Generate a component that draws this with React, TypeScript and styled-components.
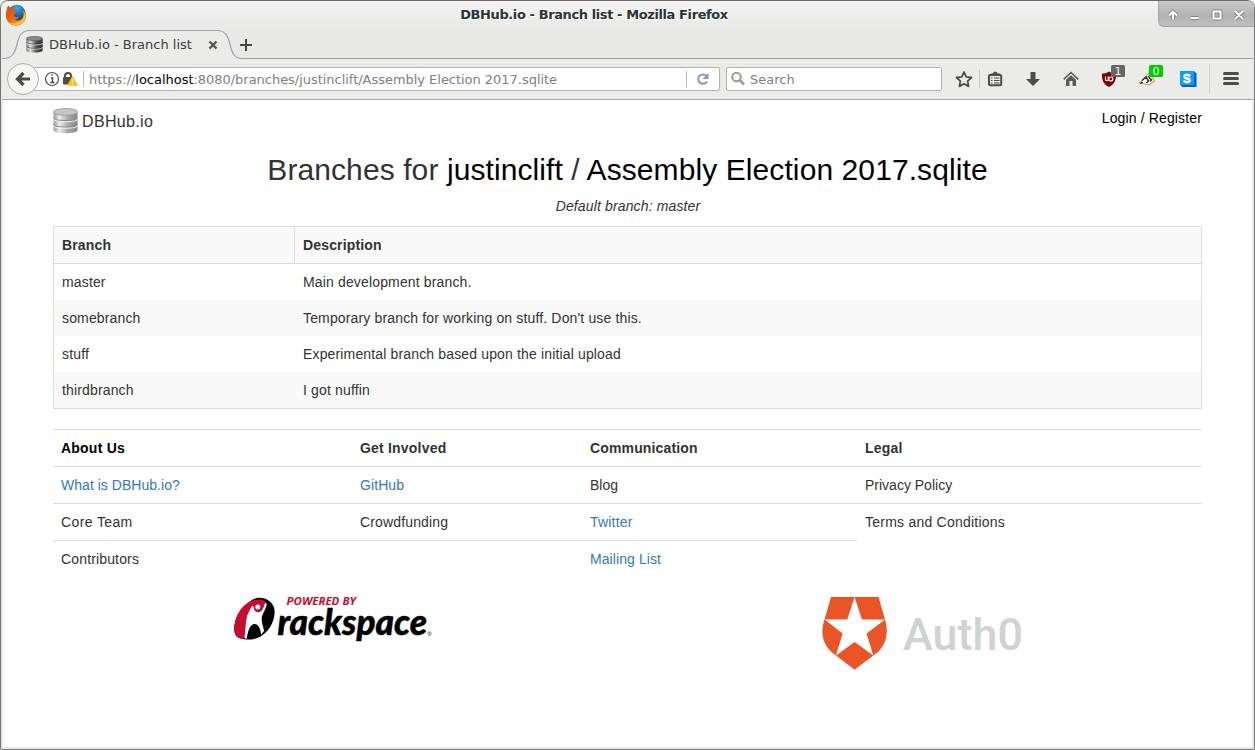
import React from 'react';
import styled, { createGlobalStyle } from 'styled-components';

const Global = createGlobalStyle`
  *, *::before, *::after { box-sizing: border-box; }
  body { margin: 0; background: #fff; }
`;

const Window = styled.div`
  width: 1255px;
  height: 750px;
  display: flex;
  flex-direction: column;
  border: 1px solid #767676;
  border-top-color: #6d6b6b;
  border-radius: 8px 8px 2px 2px;
  overflow: hidden;
  background: #e8e8e7;
  font-family: 'DejaVu Sans', sans-serif;
  font-size: 13px;
  color: #2e3436;
`;

const TitleBar = styled.header`
  height: 29px;
  flex: none;
  display: flex;
  align-items: flex-start;
  background: linear-gradient(#f3f3f3, #e8e8e7);
`;

const TitleIcon = styled.div`
  width: 29px;
  padding: 3px 0 0 4px;
`;

const Title = styled.div`
  flex: 1;
  line-height: 27px;
  text-align: center;
  font-weight: bold;
  font-size: 13px;
  letter-spacing: -0.4px;
  text-shadow: 1px 1px 0 #fff;
`;

const WindowControls = styled.div`
  width: 96px;
  height: 26px;
  border: solid #a5a5a5;
  border-width: 0 0 1px 1px;
  border-radius: 0 0 0 6px;
  background: linear-gradient(#c9c9c9, #b2b2b2 60%, #c0c0c0);
`;

const TabStrip = styled.div`
  height: 29px;
  flex: none;
  display: grid;
  grid-template-columns: 240px 1fr;
  margin: 0 1px;
  background: linear-gradient(#9a9a99, #9a9a99) bottom / 100% 1px no-repeat;
`;

const Tab = styled.div`
  display: grid;
  height: 29px;
  > * { grid-area: 1 / 1; }
`;

const TabLabel = styled.div`
  display: flex;
  align-items: center;
  padding-left: 24px;
  height: 29px;
`;

const TabText = styled.span`
  width: 165px;
  padding-left: 6px;
  white-space: nowrap;
  color: #3a3f41;
`;

const NavBar = styled.nav`
  height: 41px;
  flex: none;
  display: flex;
  align-items: center;
  margin: 0 1px;
  border-bottom: 1px solid #a9a8a4;
  background: #ebebea;
  color: #808080;
`;

const BackButton = styled.div`
  width: 32px;
  height: 32px;
  margin-left: 5px;
  flex: none;
  border: 1px solid #adadad;
  border-radius: 50%;
  background: #f6f6f5;
  display: flex;
  align-items: center;
  justify-content: center;
  z-index: 1;
`;

const Field = styled.div<{ $w: number }>`
  width: ${p => p.$w}px;
  height: 24px;
  flex: none;
  display: flex;
  align-items: center;
  border: 1px solid #b3b3b0;
  border-radius: 2px;
  background: #fff;
  white-space: nowrap;
`;

const UrlField = styled(Field)`
  margin-left: -6px;
  padding-left: 10px;
`;

const SearchField = styled(Field)`
  margin-left: 6px;
  padding-left: 3px;
  gap: 4px;
`;

const Divider = styled.i<{ $h: number; $l: number; $r: number }>`
  width: 1px;
  height: ${p => p.$h}px;
  margin: 0 ${p => p.$r}px 0 ${p => p.$l}px;
  background: #b9b9b7;
  flex: none;
`;

const UrlText = styled.div`
  flex: 1;
  letter-spacing: -0.03px;
  b { font-weight: normal; color: #000; }
`;

const Tools = styled.div`
  flex: none;
  height: 40px;
`;

const Page = styled.main`
  flex: 1;
  margin: 0 2px 2px;
  padding: 8px 50px 0 50px;
  background: #fff;
  color: #333;
  font-family: 'Liberation Sans', Arial, sans-serif;
  font-size: 14px;
  line-height: 20px;
`;

const PageHeader = styled.div`
  display: flex;
  height: 43px;
  align-items: flex-start;
`;

const Brand = styled.div`
  flex: 1;
  display: flex;
  align-items: center;
  gap: 4px;
  height: 26px;
  font-size: 16px;
  letter-spacing: 0.35px;
  > span { padding-top: 2px; }
`;

const Login = styled.div`
  color: #000;
  letter-spacing: 0.14px;
`;

const Heading = styled.h2`
  margin: 0;
  height: 37px;
  line-height: 37px;
  font-size: 30px;
  font-weight: normal;
  letter-spacing: 0.09px;
  text-align: center;
  white-space: nowrap;
  a { color: #000; }
`;

const DefaultBranch = styled.div`
  height: 38px;
  padding: 8px 0 0 1px;
  text-align: center;
  font-style: italic;
  letter-spacing: 0.14px;
`;

const BranchTable = styled.div`
  border: 1px solid #ddd;
  margin-bottom: 20px;
`;

const BranchRow = styled.div<{ $head?: boolean; $odd?: boolean }>`
  display: grid;
  grid-template-columns: 241px 1fr;
  height: ${p => (p.$head ? 37 : 36)}px;
  line-height: 36px;
  letter-spacing: 0.15px;
  font-weight: ${p => (p.$head ? 'bold' : 'normal')};
  background: ${p => (p.$head || p.$odd ? '#f9f9f9' : '#fff')};
  border-bottom: ${p => (p.$head ? '1px solid #ddd' : '0')};
  > span { padding-left: 8px; }
  > span:first-child { border-right: ${p => (p.$head ? '1px solid #ddd' : '0')}; }
`;

const FooterTable = styled.div`
  display: grid;
  grid-template-columns: 299px 230px 275px 345px;
`;

const FooterCell = styled.div<{ $kind?: string; $track?: number }>`
  height: 37px;
  line-height: 36px;
  padding-left: 8px;
  letter-spacing: ${p => p.$track ?? 0}px;
  border-top: 1px solid ${p => (p.$kind === 'none' ? 'transparent' : '#ddd')};
  font-weight: ${p => (p.$kind === 'head' || p.$kind === 'first' ? 'bold' : 'normal')};
  color: ${p => (p.$kind === 'link' ? '#337ab7' : p.$kind === 'first' ? '#000' : '#333')};
`;

const Sponsors = styled.div`
  display: grid;
  grid-template-columns: 588px 1fr;
  align-items: start;
  padding: 9px 0 0 181px;
  svg { overflow: visible; }
  svg:last-child { margin-top: 11px; }
`;

const branches = [
  ['master', 'Main development branch.'],
  ['somebranch', "Temporary branch for working on stuff. Don't use this."],
  ['stuff', 'Experimental branch based upon the initial upload'],
  ['thirdbranch', 'I got nuffin'],
];

const footer: [string, string?, number?][] = [
  ['About Us', 'first', 0.22], ['Get Involved', 'head', 0.2], ['Communication', 'head', 0.15], ['Legal', 'head', 0.2],
  ['What is DBHub.io?', 'link', 0.03], ['GitHub', 'link', 0.08], ['Blog'], ['Privacy Policy'],
  ['Core Team', '', 0.38], ['Crowdfunding', '', 0.15], ['Twitter', 'link', 0.2], ['Terms and Conditions', '', 0.23],
  ['Contributors', '', 0.15], [''], ['Mailing List', 'link', 0.08], ['', 'none'],
];

const Database = ({ w, h, dark }: { w: number; h: number; dark?: boolean }) => {
  const id = dark ? 'dbDark' : 'dbLight';
  const stops = dark ? ['#777', '#ddd', '#555', '#333'] : ['#999', '#eee', '#aaa', '#858585'];
  return (
    <svg width={w} height={h} viewBox="0 0 24 26" preserveAspectRatio="none">
      <defs>
        <linearGradient id={id}>
          <stop offset="0" stopColor={stops[0]} />
          <stop offset=".25" stopColor={stops[1]} />
          <stop offset=".6" stopColor={stops[2]} />
          <stop offset="1" stopColor={stops[3]} />
        </linearGradient>
      </defs>
      <path d="M.5 4v18c0 4.300 23 4.300 23 0V4z" fill={`url(#${id})`} />
      <path d="M.5 9.500c0 4 23 4 23 0M.5 16c0 4 23 4 23 0" fill="none" stroke={dark ? '#333' : '#8a8a8a'} strokeWidth="1" />
      <path d="M.5 10.700c0 4 23 4 23 0M.5 17.200c0 4 23 4 23 0" fill="none" stroke="#eee" strokeWidth="1" />
      <ellipse cx="12" cy="3.900" rx="11.500" ry="3.400" fill={dark ? '#888' : '#c6c6c6'} stroke={dark ? '#555' : '#999'} strokeWidth=".8" />
    </svg>
  );
};

const Firefox = () => (
  <svg width="22" height="22" viewBox="0 0 22 22">
    <defs>
      <linearGradient id="fox" x1="0" y1="0" x2="1" y2="1">
        <stop offset="0" stopColor="#d9480f" />
        <stop offset=".5" stopColor="#ee6a12" />
        <stop offset="1" stopColor="#ffc928" />
      </linearGradient>
      <radialGradient id="globe" cx=".5" cy=".2" r=".8">
        <stop offset="0" stopColor="#35b1e6" />
        <stop offset="1" stopColor="#123c7c" />
      </radialGradient>
    </defs>
    <circle cx="11" cy="11.500" r="10" fill="#c9380d" />
    <circle cx="12" cy="8.700" r="8" fill="url(#globe)" />
    <path d="M2 5c0-2 1-3 2-3.500 0 1.300.5 2 1.500 2.500 1.500-.5 3 0 4.500 1-1 .5-2 1.500-1 2.500l2 .6c0 1.200-1.500 1.700-2.300 2.400.1 2.500 3 3.500 5.300 2.500-1 2.500-4 2.500-5 2 3 3 10 1.500 9.500-5-.1-2-.7-3.300-1.500-4.300C20 7 21 9.500 21 12c0 6-5 9.500-10 9.500S1 17.500 1 11.500C1 8.500 1.500 6.500 2 5z" fill="url(#fox)" />
    <path d="M20.500 9c1 7-4 12-9.500 12-3 0-5-.9-7-2.800 7 2.800 14.500-.7 15-7.200z" fill="#ffd23a" opacity=".75" />
  </svg>
);

const Controls = () => (
  <svg width="95" height="25" viewBox="0 0 95 25">
    <g fill="none" stroke="#858585" strokeWidth="4" strokeLinejoin="round">
      <path d="M14 18.500v-7M10 14.500l4-3.800 4 3.800M31.500 17h8M54.500 10.500h7v7h-7zM76 10.500l8 7.500M84 10.500l-8 7.500" />
    </g>
    <g fill="none" stroke="#fff" strokeWidth="2">
      <path d="M14 18.500v-7M10 14.500l4-3.800 4 3.800M31.500 17h8M54.500 10.500h7v7h-7zM76 10l8 8M84 10l-8 8" />
    </g>
  </svg>
);

const TabShape = () => (
  <svg width="240" height="29" viewBox="0 0 240 29">
    <path d="M0 29V28.500h3c7 0 10-6 12-14C17 5 20 .5 28 .5h187c8 0 11 5 13 14 2 8 4 14 12 14V29z" fill="#ebebea" />
    <path d="M0 28.500h2c8 0 11-6 13-14C17 5 20 .5 28 .5h187c8 0 11 5 13 14 2 8 4 14 12 14" fill="none" stroke="#9ba3ad" strokeWidth="1.200" />
  </svg>
);

const PageInfo = () => (
  <svg width="34" height="18" viewBox="0 0 34 18">
    <circle cx="8" cy="9" r="6.500" fill="none" stroke="#4d4d4d" strokeWidth="1.200" />
    <path d="M7 8h1.500v4.500M6.500 12.500h4M7.300 5h1.500" fill="none" stroke="#4d4d4d" strokeWidth="1.500" />
    <path d="M21 8V6a3 3 0 0 1 6 0v2" fill="none" stroke="#4d4d4d" strokeWidth="2" />
    <rect x="19" y="7" width="9" height="7.500" rx="1" fill="#4d4d4d" />
    <path d="M28.500 6.500l4.800 8.800h-9.600z" fill="#ffbf00" stroke="#ffbf00" strokeWidth="1" strokeLinejoin="round" />
    <path d="M28.500 9v3.500M28.500 13.300v1.400" stroke="#fff" strokeWidth="1.400" />
  </svg>
);

const Toolbar = () => (
  <svg width="309" height="40" viewBox="942 59 309 40" fontFamily="DejaVu Sans, sans-serif">
    <path d="M964 72l2.200 4.900 5.300.6-3.900 3.600 1 5.300-4.600-2.700-4.600 2.700 1-5.300-3.900-3.600 5.300-.6z" fill="none" stroke="#4c4c4c" strokeWidth="1.800" strokeLinejoin="round" />
    <path d="M979.500 70v18" stroke="#c2c2c0" />
    <rect x="989" y="75" width="12.200" height="10.300" rx="1" fill="#ebebea" stroke="#4c4c4c" strokeWidth="2" />
    <path d="M990.500 75.500v-2h2.500c0-2.200 4.500-2.200 4.500 0h2.500v2z" fill="#4c4c4c" />
    <path d="M991 78h1.500M994 78h5.500M991 80.500h1.500M994 80.500h5.500M991 83h1.500M994 83h5.500" stroke="#4c4c4c" strokeWidth="1.200" />
    <path d="M1030.500 72h5v7h4.500l-7 7-7-7h4.500z" fill="#4c4c4c" />
    <path d="M1063.700 79.300l7.300-6.800 7.300 6.800" fill="none" stroke="#5a5a5a" strokeWidth="1.600" />
    <path d="M1066 79.700l5-4.400 5 4.400v6.300h-3.500v-5h-3v5h-3.500z" fill="#5a5a5a" />
    <path d="M1109 71.500c2.500 1.700 4.500 2 7 2 .3 6-1 10.500-7 13.500-6-3-7.300-7.500-7-13.500 2.500 0 4.500-.3 7-2z" fill="#800000" />
    <path d="M1105.500 76.500v2.700c0 2 2.800 2 2.800 0v-2.700" fill="none" stroke="#fff" strokeWidth="1.200" />
    <circle cx="1110.800" cy="79" r="2" fill="none" stroke="#fff" strokeWidth="1.200" />
    <rect x="1111" y="65" width="14" height="12" rx="1.500" fill="#666" />
    <text x="1118" y="74.500" fontSize="11" fill="#fff" textAnchor="middle">1</text>
    <path d="M1139.500 83l4.500-4 4-5.500 3 2 3.500 5.500-5.500 4-4-1z" fill="#fff" stroke="#d9985a" strokeWidth="1.100" />
    <path d="M1139.500 84l2-2.500 2 1.500z" fill="#222" />
    <path d="M1142 80.500l4-3.500 2.500 4-2 2M1148 76l3.500 4-1.500 1.500" fill="none" stroke="#333" strokeWidth="1.500" />
    <rect x="1149" y="65" width="14" height="12" rx="1.500" fill="#00cc00" />
    <text x="1156" y="74.500" fontSize="11" fill="#fff" textAnchor="middle">0</text>
    <path d="M1180 71h14l2.500 2.500v13.500h-14l-2.500-2.500z" fill="#0066b8" />
    <rect x="1180" y="71" width="14" height="14" fill="#0f9bff" />
    <text x="1187" y="82.500" fontSize="11.500" fontWeight="bold" fill="#fff" stroke="#fff" strokeWidth=".6" textAnchor="middle">S</text>
    <path d="M1209.500 64v30" stroke="#d2d2d0" />
    <path d="M1224.500 73.500h13M1224.500 78.500h13M1224.500 83.500h13" stroke="#4c4c4c" strokeWidth="3" strokeLinecap="round" />
  </svg>
);

const Rackspace = () => (
  <svg width="210" height="64" viewBox="234 586 210 64" fontFamily="Open Sans, sans-serif">
    <g transform="translate(230.500 592) scale(.3333)">
      <path d="M68 22C85 12 118 16 130 45 140 75 118 125 80 138 60 145 45 143 38 140 20 142 8 125 12 100 16 65 45 35 68 22z" fill="#000" />
      <path d="M12 100C16 65 40 33 68 25 85 20 100 22 108 32L98 50 60 80 42 139C18 143 8 125 12 100z" fill="#c60c30" />
      <path d="M42 137C44 115 46 95 48 80 50 66 58 56 64 42L69 42C69 54 76 62 84 61 94 59 99 48 104 32L109 36C107 50 98 62 94 74 92 90 98 105 101 116L92 128C90 108 82 94 70 96 56 99 52 122 48 142z" fill="#fff" />
      <circle cx="82" cy="45" r="10" fill="#fff" stroke="#c60c30" strokeWidth="5" />
    </g>
    <text x="286.500" y="605" fontSize="10" fontWeight="bold" fontStyle="italic" fill="#c60c30" textLength="69.500" lengthAdjust="spacingAndGlyphs">POWERED BY</text>
    <text x="277.500" y="635" fontFamily="Lato, sans-serif" fontSize="36" fontWeight="900" fontStyle="italic" fill="#000" stroke="#000" strokeWidth=".5" textLength="149.500" lengthAdjust="spacingAndGlyphs">rackspace</text>
    <text x="427" y="635.500" fontSize="6" fill="#333">®</text>
  </svg>
);

const Auth0 = () => (
  <svg width="203" height="76" viewBox="0 0 203 76">
    <path d="M9 0H56.500L63 22.500C68 39 62 52 51.300 58.500L32.600 72.700 14 58.500C3 51-3 39 2.500 22.500z" fill="#eb5424" />
    <path d="M32.600 0L40 22.500H63L44.600 36.500 51.300 58.500 32.600 45 14 58.500 20.600 36.500 2.600 22.500H25.300z" fill="#fff" />
    <text x="81" y="53" fontFamily="Roboto, sans-serif" fontSize="45" fontWeight="500" fill="#d0d2d3" textLength="120" lengthAdjust="spacingAndGlyphs">Auth0</text>
  </svg>
);

export default function App() {
  return (
    <Window>
      <Global />
      <TitleBar>
        <TitleIcon><Firefox /></TitleIcon>
        <Title>DBHub.io - Branch list - Mozilla Firefox</Title>
        <WindowControls><Controls /></WindowControls>
      </TitleBar>
      <TabStrip>
        <Tab>
          <TabShape />
          <TabLabel>
            <Database w={17} h={17} dark />
            <TabText>DBHub.io - Branch list</TabText>
            <svg width="10" height="10" viewBox="0 0 10 10"><path d="M1.500 1.500l7 7M8.500 1.500l-7 7" stroke="#555" strokeWidth="2.400" /></svg>
          </TabLabel>
        </Tab>
        <svg width="16" height="29" viewBox="0 0 16 29" overflow="visible"><path d="M-2 15h12M4 9v12" stroke="#444" strokeWidth="2" /></svg>
      </TabStrip>
      <NavBar>
        <BackButton>
          <svg width="16" height="16" viewBox="0 0 16 16"><path d="M15 8H3M8.500 2L2.500 8l6 6" fill="none" stroke="#4c4c4c" strokeWidth="3.200" /></svg>
        </BackButton>
        <UrlField $w={687}>
          <PageInfo />
          <Divider $h={16} $l={5} $r={5} />
          <UrlText>https://<b>localhost</b>:8080/branches/justinclift/Assembly Election 2017.sqlite</UrlText>
          <Divider $h={16} $l={0} $r={9} />
          <svg width="23" height="14" viewBox="0 0 23 14"><path d="M10.500 4A4.700 4.700 0 1 0 11 9.500" fill="none" stroke="#8a99ab" strokeWidth="2" /><path d="M12.500 1v6h-6z" fill="#8a99ab" /></svg>
        </UrlField>
        <SearchField $w={216}>
          <svg width="16" height="16" viewBox="0 0 16 16"><circle cx="6.500" cy="6" r="4.300" fill="none" stroke="#999" strokeWidth="2" /><path d="M9.500 9l4.500 4.500" stroke="#999" strokeWidth="2.500" /></svg>
          Search
        </SearchField>
        <Tools><Toolbar /></Tools>
      </NavBar>
      <Page>
        <PageHeader>
          <Brand><Database w={25} h={26} /><span>DBHub.io</span></Brand>
          <Login>Login / Register</Login>
        </PageHeader>
        <Heading>Branches for <a>justinclift</a> / <a>Assembly Election 2017.sqlite</a></Heading>
        <DefaultBranch>Default branch: master</DefaultBranch>
        <BranchTable>
          <BranchRow $head><span>Branch</span><span>Description</span></BranchRow>
          {branches.map(([name, text], i) => (
            <BranchRow key={name} $odd={i % 2 === 1}><span>{name}</span><span>{text}</span></BranchRow>
          ))}
        </BranchTable>
        <FooterTable>
          {footer.map(([text, kind, track], i) => (
            <FooterCell key={i} $kind={kind} $track={track}>{text}</FooterCell>
          ))}
        </FooterTable>
        <Sponsors><Rackspace /><Auth0 /></Sponsors>
      </Page>
    </Window>
  );
}
